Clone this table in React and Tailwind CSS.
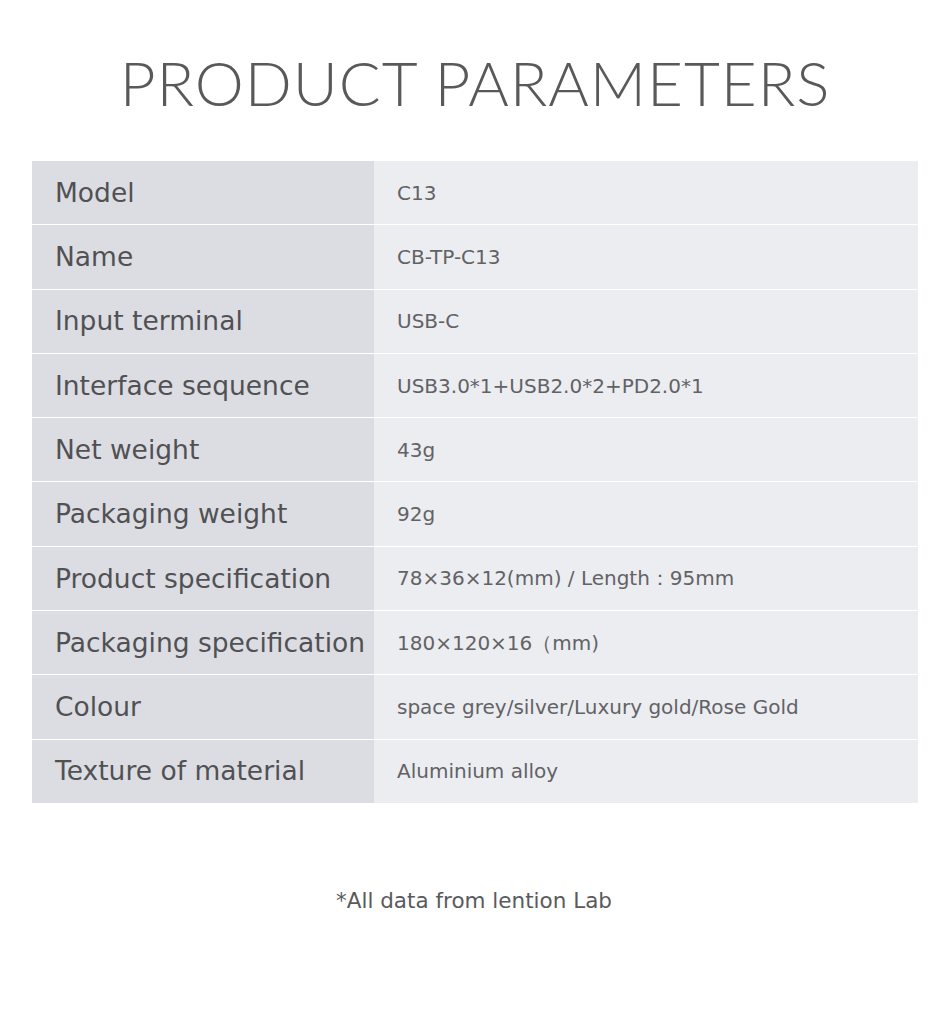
import React from "react";

// Parameter rows: label on the grey column, value on the light column.
const PARAMS = [
  { label: "Model", value: "C13" },
  { label: "Name", value: "CB-TP-C13" },
  { label: "Input terminal", value: "USB-C" },
  { label: "Interface sequence", value: "USB3.0*1+USB2.0*2+PD2.0*1" },
  { label: "Net weight", value: "43g" },
  { label: "Packaging weight", value: "92g" },
  { label: "Product specification", value: "78×36×12(mm) / Length：95mm" },
  { label: "Packaging specification", value: "180×120×16（mm)" },
  { label: "Colour", value: "space grey/silver/Luxury gold/Rose Gold" },
  { label: "Texture of material", value: "Aluminium alloy" },
];

export default function App() {
  return (
    <div
      className="w-[950px] h-[1011px] bg-white flex flex-col items-center"
      style={{ fontFamily: "'DejaVu Sans', 'Noto Sans', sans-serif" }}
    >
      {/* Title */}
      <h1
        className="mt-[44px] h-[76px] text-[62px] leading-[76px] font-light tracking-[0.015em] text-[#59595b]"
        style={{ fontFamily: "Lato, sans-serif" }}
      >
        PRODUCT PARAMETERS
      </h1>

      {/* Table */}
      <div className="mt-[41px] w-[886px] flex flex-col gap-px bg-white">
        {PARAMS.map((p) => (
          <div key={p.label} className="flex h-[63.3px]">
            <div className="w-[342px] bg-[#dcdde2] flex items-center pl-[23px] text-[26.5px] text-[#515154] whitespace-nowrap">
              {p.label}
            </div>
            <div className="flex-1 bg-[#ecedf1] flex items-center pl-[23px] text-[20px] text-[#626265] whitespace-nowrap">
              {p.value}
            </div>
          </div>
        ))}
      </div>

      {/* Footnote */}
      <p className="mt-[82px] ml-[-2px] text-[21.5px] text-[#5a5a5c]">
        *All data from lention Lab
      </p>
    </div>
  );
}
